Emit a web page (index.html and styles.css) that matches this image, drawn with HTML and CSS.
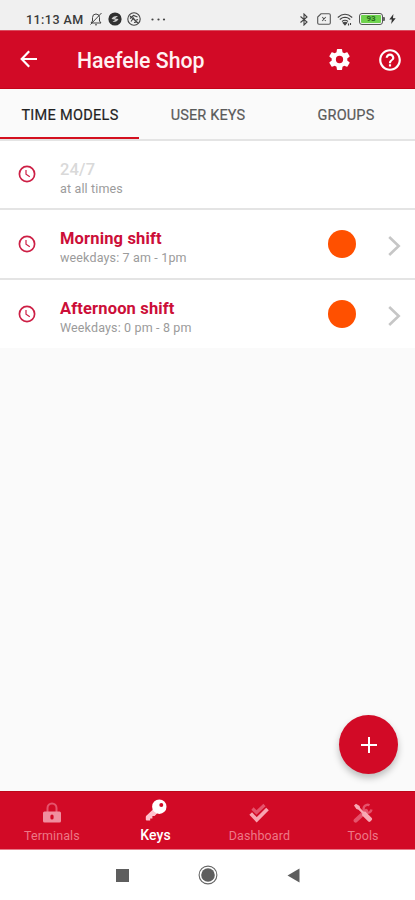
FILE: index.html
```html
<!DOCTYPE html>
<html lang="en">
<head>
<meta charset="utf-8">
<title>Haefele Shop</title>
<link rel="stylesheet" href="styles.css">
</head>
<body>
<div class="phone">
  <div class="status">
    <span class="time">11:13 AM</span>
    <svg class="st-bell" width="12" height="14" viewBox="0 0 12 14" fill="none" stroke="#444" stroke-width="1"><path d="M1 11h10L9.500 9V5.500a3.500 3.500 0 0 0-7 0V9zM5 12.800h2M11.500 1 .5 12.500"/></svg>
    <svg class="st-dot" width="14" height="14" viewBox="0 0 14 14"><circle cx="7" cy="7" r="6.600" fill="#303030"/><path d="M3.500 7q1.500-3.500 6.500-3L7 6.500l3.500.5Q9 10.500 4.500 10L7.500 7.700z" fill="#ccc"/></svg>
    <svg class="st-ring" width="14" height="14" viewBox="0 0 14 14" fill="none" stroke="#444" stroke-width="1.100"><circle cx="7" cy="7" r="6.200"/><path d="M3 6.500 6.500 3.500 10.500 5M4 9.500 6.500 6 8 8.500 11 7.500M7 10.500 10 10M3 4l8 7"/></svg>
    <svg class="st-more" width="15" height="3" viewBox="0 0 15 3" fill="#444"><circle cx="1.500" cy="1.500" r="1.100"/><circle cx="7.500" cy="1.500" r="1.100"/><circle cx="13" cy="1.500" r="1.100"/></svg>
    <span class="grow"></span>
    <svg class="st-bt" width="8" height="13" viewBox="0 0 8 13" fill="none" stroke="#444" stroke-width="1.100"><path d="M.5 3.500 7 9 4 12V1l3 3L.5 9.500"/></svg>
    <svg class="st-sim" width="14" height="12" viewBox="0 0 14 12" fill="none" stroke="#555" stroke-width="1.100"><path d="M4 .8h8q1.300 0 1.300 1.200v8q0 1.200-1.300 1.200H2Q.7 11.200.7 10V4zM5.200 4l3.600 4M8.800 4 5.200 8"/></svg>
    <svg class="st-wifi" width="16" height="13" viewBox="0 0 16 13" fill="none" stroke="#444" stroke-width="1.100"><path d="M.8 4.500q7.200-6.500 14.400 0M2.800 6.500q5.200-4.500 10.400 0M5 8.500q3-2.600 6 0M6 4.500h4"/><path d="M6.200 9.800 8 12l1.800-2.200q-1.800-1.200-3.600 0z" fill="#444"/><path d="M11.500 10.500v2M13.500 10v2"/></svg>
    <span class="battery"><span class="charge">93</span></span>
    <svg class="st-bolt" width="7" height="10" viewBox="0 0 7 11" fill="#333"><path d="M4.500 0 0 6h2.800L2 11l5-6.300H4z"/></svg>
  </div>

  <header class="bar">
    <svg class="back" width="18" height="18" viewBox="0 0 18 18" fill="none" stroke="#fff" stroke-width="2.200"><path d="M17 9H2M9.200 1.300 1.700 9l7.500 7.700"/></svg>
    <h1 class="title">Haefele Shop</h1>
    <svg class="gear" width="25" height="25" viewBox="0 0 24 24" fill="#fff"><path d="M19.430 12.980c.04-.32.070-.64.070-.98s-.03-.66-.07-.98l2.110-1.650c.19-.15.24-.42.120-.64l-2-3.460c-.12-.22-.39-.3-.61-.22l-2.490 1c-.52-.4-1.080-.73-1.690-.98l-.38-2.650C14.460 2.180 14.250 2 14 2h-4c-.25 0-.46.180-.49.420l-.38 2.650c-.61.250-1.170.59-1.690.98l-2.490-1c-.23-.09-.49 0-.61.220l-2 3.460c-.13.220-.07.490.120.640l2.110 1.650c-.04.320-.07.650-.07.980s.03.660.070.980l-2.110 1.650c-.19.150-.24.420-.12.640l2 3.460c.12.220.39.300.610.220l2.490-1c.52.400 1.080.730 1.690.980l.38 2.650c.03.240.240.420.490.420h4c.25 0 .46-.18.490-.42l.38-2.650c.61-.25 1.170-.59 1.690-.98l2.490 1c.23.090.490 0 .61-.22l2-3.460c.12-.22.070-.49-.12-.64zM12 15.500a3.500 3.500 0 1 1 0-7 3.500 3.500 0 0 1 0 7z"/></svg>
    <svg class="help" width="26" height="26" viewBox="0 0 24 24" fill="#fff"><path d="M11 18h2v-2h-2v2zm1-16C6.480 2 2 6.480 2 12s4.480 10 10 10 10-4.480 10-10S17.520 2 12 2zm0 18c-4.410 0-8-3.590-8-8s3.590-8 8-8 8 3.590 8 8-3.590 8-8 8zm0-14c-2.210 0-4 1.790-4 4h2c0-1.100.9-2 2-2s2 .9 2 2c0 2-3 1.750-3 5h2c0-2.250 3-2.500 3-5 0-2.210-1.790-4-4-4z"/></svg>
  </header>

  <nav class="tabs">
    <span class="tab active">TIME MODELS</span>
    <span class="tab">USER KEYS</span>
    <span class="tab">GROUPS</span>
  </nav>

  <main class="content">
    <div class="row">
      <svg class="clock" width="18" height="18" viewBox="0 0 18 18" fill="none" stroke="#cd1f45" stroke-width="1.700"><circle cx="9" cy="9" r="7.600"/><path d="M8 5v4.200l3.800 2.500" stroke-width="1.200"/></svg>
      <div class="text"><div class="name muted">24/7</div><div class="sub">at all times</div></div>
    </div>
    <div class="row">
      <svg class="clock" width="18" height="18" viewBox="0 0 18 18" fill="none" stroke="#cd1f45" stroke-width="1.700"><circle cx="9" cy="9" r="7.600"/><path d="M8 5v4.200l3.800 2.500" stroke-width="1.200"/></svg>
      <div class="text"><div class="name">Morning shift</div><div class="sub">weekdays: 7 am - 1pm</div></div>
      <span class="dot"></span>
      <svg class="chev" width="13" height="20" viewBox="0 0 13 20" fill="none" stroke="#c6c6c6" stroke-width="2.600"><path d="m1.200 1 9.500 9-9.500 9"/></svg>
    </div>
    <div class="row">
      <svg class="clock" width="18" height="18" viewBox="0 0 18 18" fill="none" stroke="#cd1f45" stroke-width="1.700"><circle cx="9" cy="9" r="7.600"/><path d="M8 5v4.200l3.800 2.500" stroke-width="1.200"/></svg>
      <div class="text"><div class="name">Afternoon shift</div><div class="sub">Weekdays: 0 pm - 8 pm</div></div>
      <span class="dot"></span>
      <svg class="chev" width="13" height="20" viewBox="0 0 13 20" fill="none" stroke="#c6c6c6" stroke-width="2.600"><path d="m1.200 1 9.500 9-9.500 9"/></svg>
    </div>
    <div class="fab"><svg width="16" height="16" viewBox="0 0 16 16" stroke="#fff" stroke-width="2"><path d="M8 0v16M0 8h16"/></svg></div>
  </main>

  <nav class="bottom">
    <div class="item">
      <svg width="20" height="22" viewBox="0 0 20 22"><path d="M5.500 10V6a4.500 4.500 0 0 1 9 0v4" fill="none" stroke="#e5536b" stroke-width="2"/><path fill="#f08f9f" fill-rule="evenodd" d="M2.500 9.500h15q1.500 0 1.500 1.500v8q0 1.500-1.500 1.500h-15Q1 20.500 1 19v-8q0-1.500 1.500-1.500zM10 12.500q-1.600 0-1.600 1.500v2q0 1.500 1.600 1.500t1.600-1.500v-2q0-1.500-1.600-1.500z"/></svg>
      <span class="label">Terminals</span>
    </div>
    <div class="item current">
      <svg width="22" height="22" viewBox="0 0 22 22"><path d="M8.500 10 1.300 16.800q-.5.500-.5 1.200V20.500q0 1 1 1h3.400v-2h2.200v-2.600h2.200l3.400-3.400z" fill="#ffc3ce"/><path fill="#fff" fill-rule="evenodd" d="M14.300.5a7.200 7.200 0 1 1 0 14.400 7.200 7.200 0 0 1 0-14.400zM16.300 4a2 2 0 1 0 0 4 2 2 0 0 0 0-4z"/></svg>
      <span class="label">Keys</span>
    </div>
    <div class="item">
      <svg width="20" height="22" viewBox="0 0 20 22" fill="none"><path d="m3.500 6.500 4 4L15.500 3" stroke="#e5536b" stroke-width="3.200"/><path d="m1.700 11.500 6 6.300L18.500 7" stroke="#f8a5b1" stroke-width="3.700"/></svg>
      <span class="label">Dashboard</span>
    </div>
    <div class="item">
      <svg width="20" height="22" viewBox="0 0 20 22" fill="none"><path d="M2.700 18.500 13 9" stroke="#e5536b" stroke-width="4.200" stroke-linecap="round"/><path d="M16.500 3.300a4 4 0 1 0 2 4.200" stroke="#e5536b" stroke-width="2.400"/><path d="M1 3.500 3 1.700l3.600 2.200.5 2.200 3.700 3.700 1.500-.2 6.500 6.500q.8 1 0 2l-1.500 1.500q-1 .8-2 0L9 13.200l.3-1.700L5.500 7.700l-2.100-.6z" fill="#f8a9b4"/></svg>
      <span class="label">Tools</span>
    </div>
  </nav>

  <footer class="system">
    <span class="square"></span>
    <svg width="20" height="20" viewBox="0 0 20 20"><circle cx="10" cy="10" r="8.900" fill="none" stroke="#666" stroke-width="1.100"/><circle cx="10" cy="10" r="6.800" fill="#5e5e5e"/></svg>
    <svg width="13" height="15" viewBox="0 0 13 15"><path d="M12.500.5v14L.5 7.500z" fill="#5e5e5e"/></svg>
  </footer>
</div>
</body>
</html>
```
FILE: styles.css
```css
* { box-sizing: border-box; }
body { margin: 0; font-family: Roboto, "Liberation Sans", sans-serif; background: #fafafa; }
svg { display: block; flex: none; }
.phone { width: 415px; height: 900px; display: flex; flex-direction: column; overflow: hidden; }

.status { height: 30px; flex: none; display: flex; align-items: center; padding: 8px 19px 0 26px; background: #f0f0f0; }
.time { width: 58px; font-size: 12.5px; font-weight: 500; letter-spacing: .45px; color: #3a3a3a; white-space: nowrap; }
.st-bell { margin-left: 6px; }
.st-dot { margin-left: 6px; }
.st-ring { margin-left: 5px; }
.st-more { margin-left: 10px; }
.grow { flex: 1; }
.st-sim { margin-left: 9px; }
.st-wifi { margin-left: 6px; }
.battery { position: relative; width: 24px; height: 12px; margin-left: 6px; border: 1px solid #555; border-radius: 3px; padding: 1px; }
.battery::after { content: ""; position: absolute; right: -3px; top: 3px; width: 2px; height: 4px; background: #666; border-radius: 0 1px 1px 0; }
.charge { display: block; height: 8px; border-radius: 1px; background: #6fd34e; color: #286b1b; font-size: 8px; line-height: 8px; font-weight: 700; text-align: center; }
.st-bolt { margin-left: 6px; }

.bar { height: 59px; flex: none; display: flex; align-items: center; padding: 0 12px 0 20px; background: #d20a26; border-top: 1px solid #da4c5f; border-bottom: 1px solid #c40419; }
.back { margin-bottom: 2px; }
.title { flex: 1; margin: 3px 0 0 39px; font-size: 21.3px; font-weight: 500; line-height: 26px; color: #fff1f2; }
.gear { margin-right: 25px; }

.tabs { height: 52px; flex: none; display: flex; background: #fafafa; border-bottom: 2px solid #e4e4e4; }
.tab { flex: 1; height: 50px; display: flex; align-items: center; justify-content: center; padding-top: 2px; font-size: 14.5px; letter-spacing: .15px; color: #5a5a5a; -webkit-text-stroke: .2px; }
.active { color: #222; border-bottom: 2px solid #d4101f; padding: 4px 0 0 1px; letter-spacing: .3px; }

.content { position: relative; flex: 1; }
.row { height: 69px; display: flex; align-items: center; padding: 0 14px 0 18px; background: #fff; }
.row + .row { height: 70px; border-top: 2px solid #e4e4e4; }
.row:first-child { height: 67px; }
.clock { margin-bottom: 1px; }
.text { flex: 1; margin-left: 24px; padding-top: 8px; }
.name { font-size: 16.5px; line-height: 20px; font-weight: 700; letter-spacing: .15px; color: #cc0e38; }
.muted { font-weight: 500; color: #d9d9d9; }
.sub { font-size: 12.5px; line-height: 18px; letter-spacing: .15px; color: #9b9b9b; }
.dot { width: 28px; height: 28px; border-radius: 50%; background: #ff5000; margin-right: 32px; }
.chev { margin-top: 4px; }
.fab { position: absolute; right: 17px; bottom: 17px; width: 59px; height: 59px; border-radius: 50%; background: #d20a26; box-shadow: 0 4px 7px rgba(0, 0, 0, .25); display: flex; align-items: center; justify-content: center; }

.bottom { height: 59px; flex: none; display: flex; background: #d20a26; border-top: 1px solid #bd0819; border-bottom: 1px solid #e77b89; }
.item { flex: 1; display: flex; flex-direction: column; align-items: center; padding-top: 10px; color: #ed7887; }
.label { font-size: 12.5px; line-height: 16px; margin-top: 4px; letter-spacing: .1px; }
.current { padding-top: 7px; color: #fff; }
.current .label { font-size: 14px; font-weight: 500; margin-top: 6px; }

.system { height: 50px; flex: none; display: flex; align-items: center; justify-content: center; background: #fff; gap: 69px; }
.square { width: 13px; height: 13px; background: #5e5e5e; }
```
